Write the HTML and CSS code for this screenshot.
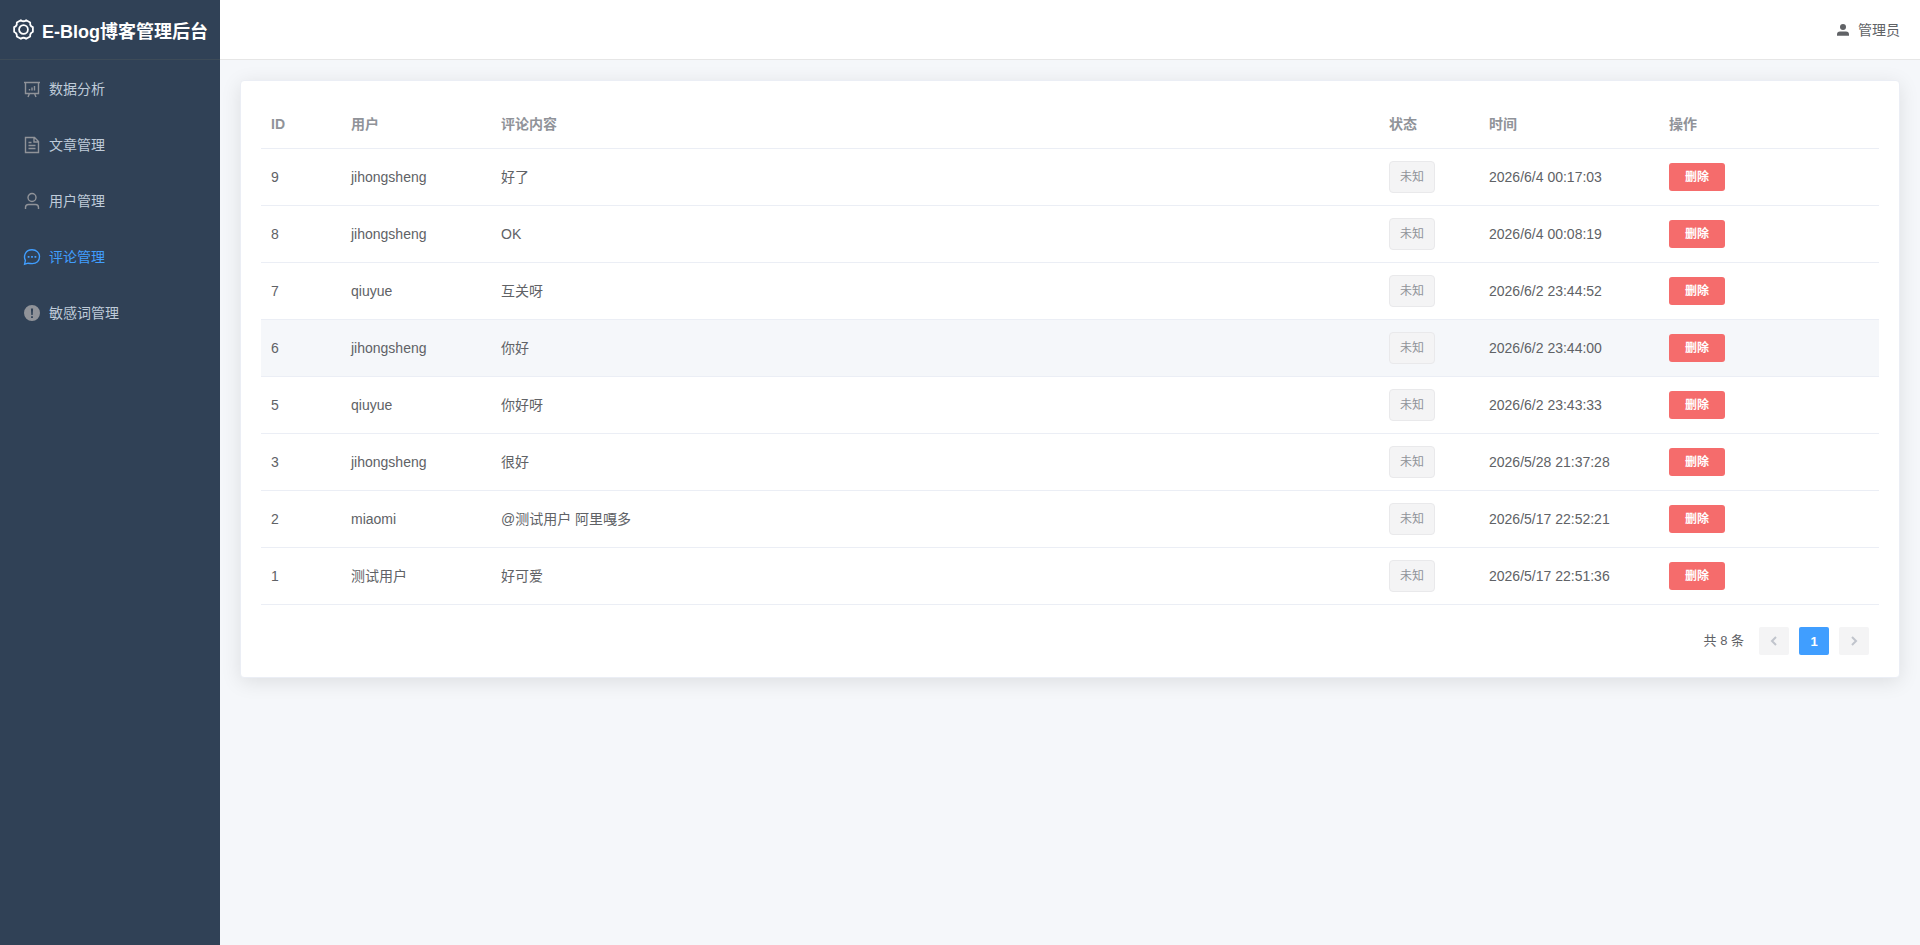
FILE: index.html
```html
<!DOCTYPE html>
<html lang="zh-CN">
<head>
<meta charset="utf-8">
<title>E-Blog博客管理后台</title>
<link rel="stylesheet" href="styles.css">
</head>
<body>
<div class="app">
  <aside class="sidebar">
    <div class="logo">
      <svg class="logo-icon" viewBox="0 0 20 20" aria-hidden="true"><path d="M12.540 1.160 16.390 3.380Q15.900 6.600 18.930 7.770V12.230Q15.900 13.400 16.390 16.620L12.540 18.840Q10 16.800 7.460 18.840L3.610 16.620Q4.100 13.400 1.070 12.230V7.770Q4.100 6.600 3.610 3.380L7.460 1.160Q10 3.200 12.540 1.160Z"/><circle cx="10" cy="10" r="4.200"/></svg>
      <span>E-Blog博客管理后台</span>
    </div>
    <nav class="menu">
      <a class="menu-item" href="#"><svg viewBox="0 0 18 18" aria-hidden="true"><path d="M1 2.500H17M2.500 2.500V13.500H15.500V2.500M6.500 13.500 5 17M11.500 13.500 13 17M6.500 10.500V9M9 10.500V7.500M11.500 10.500V6"/></svg><span>数据分析</span></a>
      <a class="menu-item" href="#"><svg viewBox="0 0 18 18" aria-hidden="true"><path d="M2.500 1.500H11.500L15.500 5.500V16.500H2.500ZM11 1.500V6H15.500M5.500 6.500H8.500M5.500 9.500H12.500M5.500 12.500H12.500"/></svg><span>文章管理</span></a>
      <a class="menu-item" href="#"><svg viewBox="0 0 18 18" aria-hidden="true"><circle cx="9" cy="5.500" r="4"/><path d="M2.500 17V15.500Q2.500 12.500 5.500 12.500H12.500Q15.500 12.500 15.500 15.500V17"/></svg><span>用户管理</span></a>
      <a class="menu-item active" href="#" aria-current="page"><svg viewBox="0 0 18 18" aria-hidden="true"><path d="M1.600 16.200 2.400 12.400C.2 8 2.400 1.800 9 1.800C13.600 1.800 16.500 5 16.500 8.800C16.500 12.800 13.600 15.600 9.200 15.600C7.500 15.600 6.200 15.400 5 15.200Z"/><path class="solid" d="M4.700 8h1.800v1.800H4.700ZM8.100 8h1.800v1.800H8.100ZM11.500 8h1.800v1.800h-1.800Z"/></svg><span>评论管理</span></a>
      <a class="menu-item" href="#"><svg viewBox="0 0 18 18" aria-hidden="true"><path class="solid" fill-rule="evenodd" d="M9 1A8 8 0 1 0 9 17A8 8 0 1 0 9 1ZM7.900 4.500H10.100L9.700 11H8.300ZM8.100 12.200H9.900V14H8.100Z"/></svg><span>敏感词管理</span></a>
    </nav>
  </aside>
  <div class="content">
    <header class="topbar">
      <div class="user">
        <svg viewBox="0 0 14 14" aria-hidden="true"><circle cx="7" cy="4" r="3"/><path d="M1 12.800V11.500Q1 8.500 4 8.500H10Q13 8.500 13 11.500V12.800Z"/></svg>
        <span>管理员</span>
      </div>
    </header>
    <main class="main">
      <section class="card">
        <table class="table">
          <colgroup><col class="col-id"><col class="col-user"><col><col class="col-status"><col class="col-time"><col class="col-action"></colgroup>
          <thead><tr><th>ID</th><th>用户</th><th>评论内容</th><th>状态</th><th>时间</th><th>操作</th></tr></thead>
          <tbody>
            <tr><td>9</td><td>jihongsheng</td><td>好了</td><td><span class="tag">未知</span></td><td>2026/6/4 00:17:03</td><td><button class="delete" type="button">删除</button></td></tr>
            <tr><td>8</td><td>jihongsheng</td><td>OK</td><td><span class="tag">未知</span></td><td>2026/6/4 00:08:19</td><td><button class="delete" type="button">删除</button></td></tr>
            <tr><td>7</td><td>qiuyue</td><td>互关呀</td><td><span class="tag">未知</span></td><td>2026/6/2 23:44:52</td><td><button class="delete" type="button">删除</button></td></tr>
            <tr class="hover"><td>6</td><td>jihongsheng</td><td>你好</td><td><span class="tag">未知</span></td><td>2026/6/2 23:44:00</td><td><button class="delete" type="button">删除</button></td></tr>
            <tr><td>5</td><td>qiuyue</td><td>你好呀</td><td><span class="tag">未知</span></td><td>2026/6/2 23:43:33</td><td><button class="delete" type="button">删除</button></td></tr>
            <tr><td>3</td><td>jihongsheng</td><td>很好</td><td><span class="tag">未知</span></td><td>2026/5/28 21:37:28</td><td><button class="delete" type="button">删除</button></td></tr>
            <tr><td>2</td><td>miaomi</td><td>@测试用户 阿里嘎多</td><td><span class="tag">未知</span></td><td>2026/5/17 22:52:21</td><td><button class="delete" type="button">删除</button></td></tr>
            <tr><td>1</td><td>测试用户</td><td>好可爱</td><td><span class="tag">未知</span></td><td>2026/5/17 22:51:36</td><td><button class="delete" type="button">删除</button></td></tr>
          </tbody>
        </table>
        <div class="pagination">
          <span class="total">共 8 条</span>
          <button class="page" type="button" disabled aria-label="上一页"><svg viewBox="0 0 12 12" aria-hidden="true"><path d="M8 2 4 6 8 10"/></svg></button>
          <button class="page current" type="button">1</button>
          <button class="page" type="button" disabled aria-label="下一页"><svg viewBox="0 0 12 12" aria-hidden="true"><path d="M4 2 8 6 4 10"/></svg></button>
        </div>
      </section>
    </main>
  </div>
</div>
</body>
</html>
```
FILE: styles.css
```css
* { box-sizing: border-box; }

body {
  margin: 0;
  font-family: "Liberation Sans", "Noto Sans CJK SC", sans-serif;
  font-size: 14px;
  color: #606266;
}

button { font-family: inherit; border: 0; }

.app { display: flex; min-height: 100vh; }

.sidebar { width: 220px; flex: none; background: #304156; }

.logo {
  display: flex;
  align-items: center;
  justify-content: center;
  gap: 8px;
  height: 60px;
  padding-left: 1px;
  border-bottom: 1px solid #3d4b58;
  color: #fff;
  font-size: 18px;
  font-weight: bold;
  white-space: nowrap;
}

.logo-icon {
  width: 21px;
  height: 21px;
  fill: none;
  stroke: currentColor;
  stroke-width: 1.7;
  stroke-linejoin: round;
}

.menu { padding-top: 1px; }

.menu-item {
  display: flex;
  align-items: center;
  gap: 8px;
  height: 56px;
  padding: 0 23px;
  color: #bfcbd9;
  line-height: 20px;
  text-decoration: none;
}

.menu-item svg {
  width: 18px;
  height: 18px;
  fill: none;
  stroke: #909399;
  stroke-width: 1.4;
}

.menu-item .solid { fill: #909399; stroke: none; }
.menu-item.active { color: #409eff; }
.menu-item.active svg { stroke: #409eff; }
.menu-item.active .solid { fill: #409eff; }

.content {
  display: flex;
  flex: 1;
  flex-direction: column;
  min-width: 0;
  background: #f5f7fa;
}

.topbar {
  display: flex;
  align-items: center;
  justify-content: flex-end;
  height: 60px;
  padding: 0 20px;
  background: #fff;
  border-bottom: 1px solid #e6e6e6;
}

.user { display: flex; align-items: center; gap: 8px; line-height: 18px; }
.user svg { width: 14px; height: 14px; fill: currentColor; }

.main { padding: 20px; }

.card {
  padding: 20px;
  background: #fff;
  border: 1px solid #ebeef5;
  border-radius: 4px;
  box-shadow: 0 4px 20px 0 rgba(0, 0, 0, .1);
}

.table {
  width: 100%;
  table-layout: fixed;
  border-collapse: separate;
  border-spacing: 0;
}

.col-id { width: 80px; }
.col-user { width: 150px; }
.col-status { width: 100px; }
.col-time { width: 180px; }
.col-action { width: 220px; }

.table th,
.table td {
  padding: 0 10px;
  border-bottom: 1px solid #ebeef5;
  line-height: 23px;
  text-align: left;
  vertical-align: middle;
}

.table th { height: 48px; color: #909399; }
.table td { height: 57px; }
.table .hover td { background: #f5f7fa; }

.tag,
.delete { display: block; width: fit-content; font-size: 12px; }

.tag {
  height: 32px;
  padding: 0 10px;
  border: 1px solid #e9e9eb;
  border-radius: 4px;
  background: #f4f4f5;
  color: #909399;
  line-height: 30px;
}

.delete {
  height: 28px;
  padding: 0 16px;
  border-radius: 3px;
  background: #f56c6c;
  color: #fff;
  font-weight: bold;
  line-height: 28px;
}

.pagination {
  display: flex;
  align-items: center;
  justify-content: flex-end;
  gap: 10px;
  margin-top: 20px;
  padding: 2px 10px;
  font-size: 13px;
  line-height: 28px;
}

.total { margin-right: 5px; }

.page {
  display: flex;
  align-items: center;
  justify-content: center;
  width: 30px;
  height: 28px;
  padding: 0;
  border-radius: 2px;
  background: #f4f4f5;
  color: #c0c4cc;
  font-size: 13px;
  font-weight: bold;
}

.page.current { background: #409eff; color: #fff; }
.page svg { width: 12px; height: 12px; fill: none; stroke: currentColor; stroke-width: 2; }
```
